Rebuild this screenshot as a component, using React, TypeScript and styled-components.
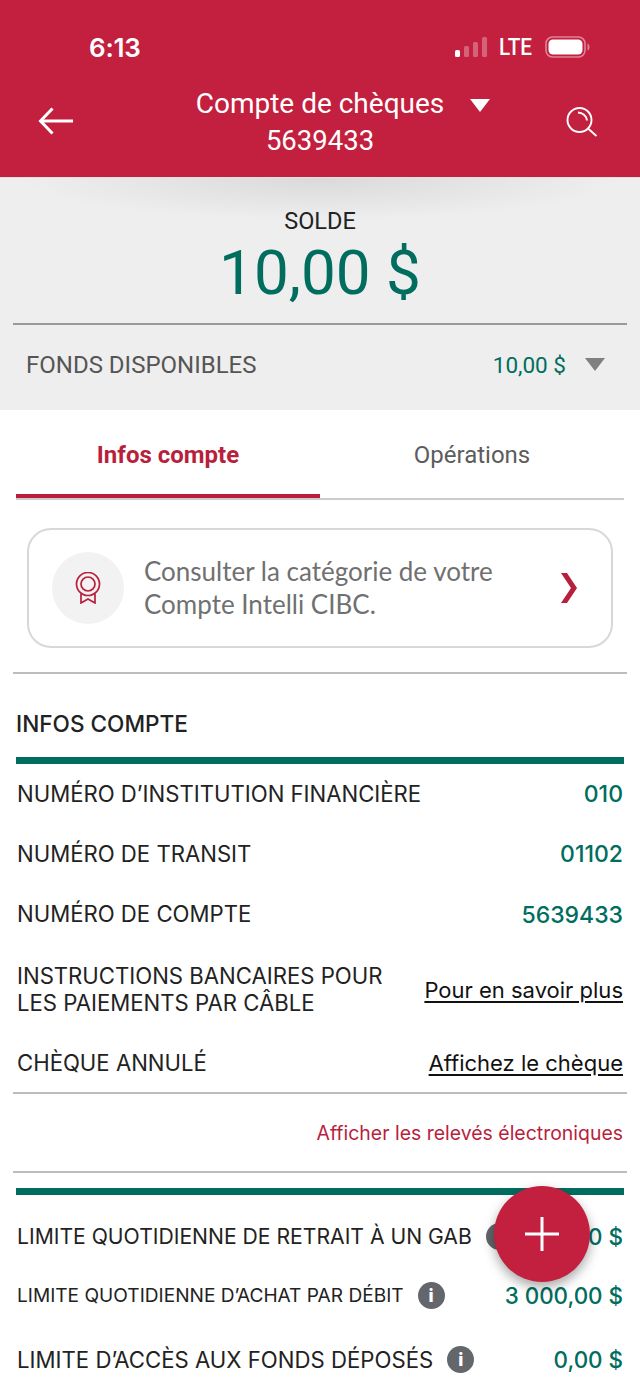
import * as React from 'react';
import styled, { createGlobalStyle } from 'styled-components';

const RED = '#c31f3e';
const TEAL = '#006d5f';

const GlobalStyle = createGlobalStyle`
  html, body {
    margin: 0;
    padding: 0;
    background: #ffffff;
  }
  body {
    font-family: 'Roboto', sans-serif;
  }
`;

const Page = styled.div`
  position: relative;
  width: 640px;
  height: 1387px;
  overflow: hidden;
  background: #ffffff;
`;

const Header = styled.header`
  height: 177px;
  background: ${RED};
  color: #ffffff;
  box-sizing: border-box;
  padding-top: 29px;
`;

const StatusBar = styled.div`
  display: flex;
  align-items: center;
  justify-content: space-between;
  height: 36px;
  padding: 0 50px 0 89px;
`;

const Clock = styled.span`
  font-family: 'Inter', sans-serif;
  font-size: 26px;
  font-weight: 600;
  letter-spacing: -0.2px;
`;

const StatusIcons = styled.div`
  display: flex;
  align-items: center;
  gap: 9px;
`;

const Lte = styled.span`
  width: 37px;
  margin-left: 3px;
  font-family: 'Roboto', sans-serif;
  font-size: 23px;
  font-weight: 500;
  transform: scaleX(0.9);
  transform-origin: left center;
`;

const NavBar = styled.div`
  display: grid;
  grid-template-columns: 1fr auto 1fr;
  align-items: start;
  padding: 21px 38px 0;
`;

const NavTitle = styled.div`
  display: flex;
  flex-direction: column;
  align-items: center;
`;

const TitleRow = styled.div`
  display: flex;
  align-items: center;
  gap: 26px;
  padding-left: 46px;
  font-size: 28px;
  line-height: 36px;
  height: 36px;
`;

const TitleCaret = styled.span`
  display: flex;
  margin-top: 3px;
`;

const AccountNumber = styled.div`
  font-size: 27.5px;
  line-height: 36px;
  margin-top: 1px;
`;

const BackButton = styled.div`
  margin-top: 20px;
  height: 36px;
`;

const SearchButton = styled.div`
  margin: 21px 4px 0 0;
  height: 36px;
  justify-self: end;
`;

const Balance = styled.section`
  height: 233px;
  background: radial-gradient(ellipse 300px 42px at 50% 0, rgba(0, 0, 0, 0.085), rgba(0, 0, 0, 0) 100%), #eeeeee;
  border-top: 1px solid #e2e2e2;
  box-sizing: border-box;
`;

const BalanceTop = styled.div`
  height: 147px;
  margin: 0 13px;
  padding-top: 30px;
  box-sizing: border-box;
  border-bottom: 2px solid #9a9a9a;
  display: flex;
  flex-direction: column;
  align-items: center;
`;

const BalanceLabel = styled.div`
  font-size: 23.5px;
  line-height: 26px;
  color: #222222;
`;

const BalanceValue = styled.div`
  font-size: 62px;
  font-weight: 380;
  line-height: 68px;
  color: ${TEAL};
  margin-top: 5px;
`;

const FundsRow = styled.div`
  display: flex;
  align-items: center;
  justify-content: space-between;
  height: 79px;
  padding: 0 35px 0 26px;
`;

const FundsLabel = styled.span`
  font-size: 24px;
  color: #555555;
`;

const FundsValue = styled.span`
  display: flex;
  align-items: center;
  gap: 19px;
  font-size: 22.5px;
  color: ${TEAL};
`;

const Tabs = styled.nav`
  display: flex;
  height: 90px;
  margin: 0 16px;
  box-sizing: border-box;
  border-bottom: 2px solid #cccccc;
`;

const Tab = styled.div<{ $active?: boolean }>`
  flex: 1;
  display: flex;
  align-items: center;
  justify-content: center;
  height: 88px;
  padding-top: 5px;
  padding-bottom: ${(p) => (p.$active ? 0 : 4)}px;
  box-sizing: border-box;
  font-size: 24px;
  font-weight: ${(p) => (p.$active ? 700 : 400)};
  color: ${(p) => (p.$active ? '#b81f3d' : '#5c5c5c')};
  border-bottom: ${(p) => (p.$active ? `4px solid #b81f3d` : 'none')};
`;

const Card = styled.div`
  display: flex;
  align-items: center;
  height: 120px;
  margin: 28px 27px 0;
  padding: 0 34px 0 23px;
  box-sizing: border-box;
  border: 2px solid #d8d8d8;
  border-radius: 24px;
`;

const CardBadge = styled.div`
  width: 72px;
  height: 72px;
  border-radius: 50%;
  background: #f2f2f2;
  display: flex;
  align-items: center;
  justify-content: center;
  flex-shrink: 0;
`;

const CardText = styled.div`
  flex: 1;
  margin-left: 20px;
  font-family: 'Lato', sans-serif;
  font-size: 26px;
  line-height: 33px;
  color: #707070;
`;

const Rule = styled.div<{ $top?: number }>`
  height: 2px;
  margin: ${(p) => p.$top ?? 0}px 13px 0;
  background: #bdbdbd;
`;

const SectionTitle = styled.h2`
  margin: 0;
  height: 83px;
  display: flex;
  align-items: center;
  padding: 15px 16px 0;
  box-sizing: border-box;
  font-family: 'Inter', sans-serif;
  font-size: 22.6px;
  font-weight: 500;
  color: #222222;
`;

const TealBar = styled.div<{ $top?: number }>`
  height: 7px;
  margin: ${(p) => p.$top ?? 0}px 16px 0;
  background: ${TEAL};
`;

const Rows = styled.div<{ $top?: number }>`
  display: flex;
  flex-direction: column;
  padding: ${(p) => p.$top ?? 0}px 17px 0;
`;

const Row = styled.div<{ $height: number }>`
  display: flex;
  align-items: center;
  justify-content: space-between;
  height: ${(p) => p.$height}px;
`;

const RowLabel = styled.span<{ $size?: number }>`
  display: flex;
  align-items: center;
  font-family: 'Inter', sans-serif;
  font-size: ${(p) => p.$size ?? 22.15}px;
  line-height: 27px;
  color: #222222;
`;

const RowValue = styled.span<{ $size?: number }>`
  font-family: 'Inter', sans-serif;
  font-size: ${(p) => p.$size ?? 23}px;
  font-weight: 500;
  color: ${TEAL};
`;

const RowLink = styled.a`
  font-family: 'Inter', sans-serif;
  font-size: 22px;
  color: #111111;
  text-decoration: underline;
  text-underline-offset: 3px;
`;

const StatementLink = styled.div`
  display: flex;
  align-items: center;
  justify-content: flex-end;
  height: 77px;
  padding: 0 17px;
  font-family: 'Inter', sans-serif;
  font-size: 19.45px;
  color: #b81f3d;
`;

const InfoDot = styled.span`
  display: inline-flex;
  align-items: center;
  justify-content: center;
  width: 27px;
  height: 27px;
  border-radius: 50%;
  background: #63666a;
  margin-left: 14px;
  color: #ffffff;
  font-family: 'Inter', sans-serif;
  font-size: 18px;
  font-weight: 800;
`;

const Fab = styled.div`
  position: absolute;
  left: 494px;
  top: 1186px;
  width: 96px;
  height: 96px;
  border-radius: 50%;
  background: ${RED};
  box-shadow: 0 5px 12px rgba(0, 0, 0, 0.35);
  display: flex;
  align-items: center;
  justify-content: center;
`;

const Triangle = ({ color, w, h }: { color: string; w: number; h: number }) => (
  <svg width={w} height={h} viewBox="0 0 20 13">
    <path d="M0 0h20L10 13z" fill={color} />
  </svg>
);

const SignalIcon = () => (
  <svg width="32" height="20" viewBox="0 0 32 20">
    <rect x="0" y="13" width="5" height="7" rx="1.5" fill="#fff" />
    <rect x="9" y="9" width="5" height="11" rx="1.5" fill="#fff" fillOpacity="0.3" />
    <rect x="18" y="5" width="5" height="15" rx="1.5" fill="#fff" fillOpacity="0.3" />
    <rect x="27" y="0" width="5" height="20" rx="1.5" fill="#fff" fillOpacity="0.3" />
  </svg>
);

const BatteryIcon = () => (
  <svg width="45" height="22" viewBox="0 0 45 22">
    <rect x="1" y="1" width="39" height="20" rx="6.5" fill="none" stroke="#fff" strokeOpacity="0.45" strokeWidth="1.6" />
    <rect x="3.5" y="3.5" width="34" height="15" rx="4.5" fill="#fff" />
    <path d="M42.5 7.5c1.5.5 2 2 2 3.5s-.5 3-2 3.5z" fill="#fff" fillOpacity="0.45" />
  </svg>
);

const BackArrow = () => (
  <svg width="36" height="30" viewBox="0 0 36 30" fill="none" stroke="#fff" strokeWidth="3">
    <path d="M35 15H3" />
    <path d="M14.5 2.5 2.5 15l12 12.5" />
  </svg>
);

const SearchIcon = () => (
  <svg width="32" height="30" viewBox="0 0 32 30" fill="none" stroke="#fff" strokeWidth="1.9">
    <circle cx="13.5" cy="13" r="12" />
    <path d="M22 21.5l8.5 7.5" />
    <path d="M12 5.5c4.5 0 8.5 3.5 9 8" />
  </svg>
);

const RibbonIcon = () => (
  <svg width="26" height="32" viewBox="0 0 26 32" fill="none" stroke="#b81f3d" strokeWidth="1.7">
    <circle cx="13" cy="12" r="11.5" />
    <circle cx="13" cy="12" r="7" />
    <path d="M6 21.5V31l7-4 7 4v-9.5" />
  </svg>
);

const Chevron = () => (
  <svg width="16" height="30" viewBox="0 0 16 30">
    <path d="M0 0h6L16 15 6 30H0l10-15z" fill="#b81f3d" />
  </svg>
);

const PlusIcon = () => (
  <svg width="36" height="36" viewBox="0 0 36 36" stroke="#fff" strokeWidth="3">
    <path d="M18 1v34M1 18h34" />
  </svg>
);

const App: React.FC = () => (
  <Page>
    <GlobalStyle />
    <Header>
      <StatusBar>
        <Clock>6:13</Clock>
        <StatusIcons>
          <SignalIcon />
          <Lte>LTE</Lte>
          <BatteryIcon />
        </StatusIcons>
      </StatusBar>
      <NavBar>
        <BackButton>
          <BackArrow />
        </BackButton>
        <NavTitle>
          <TitleRow>
            <span>Compte de chèques</span>
            <TitleCaret>
              <Triangle color="#fff" w={20} h={13} />
            </TitleCaret>
          </TitleRow>
          <AccountNumber>5639433</AccountNumber>
        </NavTitle>
        <SearchButton>
          <SearchIcon />
        </SearchButton>
      </NavBar>
    </Header>

    <Balance>
      <BalanceTop>
        <BalanceLabel>SOLDE</BalanceLabel>
        <BalanceValue>10,00 $</BalanceValue>
      </BalanceTop>
      <FundsRow>
        <FundsLabel>FONDS DISPONIBLES</FundsLabel>
        <FundsValue>
          10,00 $
          <Triangle color="#808080" w={20} h={13} />
        </FundsValue>
      </FundsRow>
    </Balance>

    <Tabs>
      <Tab $active>Infos compte</Tab>
      <Tab>Opérations</Tab>
    </Tabs>

    <Card>
      <CardBadge>
        <RibbonIcon />
      </CardBadge>
      <CardText>
        Consulter la catégorie de votre
        <br />
        Compte Intelli CIBC.
      </CardText>
      <Chevron />
    </Card>

    <Rule $top={24} />
    <SectionTitle>INFOS COMPTE</SectionTitle>
    <TealBar />

    <Rows>
      <Row $height={60}>
        <RowLabel>NUMÉRO D’INSTITUTION FINANCIÈRE</RowLabel>
        <RowValue>010</RowValue>
      </Row>
      <Row $height={60}>
        <RowLabel>NUMÉRO DE TRANSIT</RowLabel>
        <RowValue>01102</RowValue>
      </Row>
      <Row $height={61}>
        <RowLabel>NUMÉRO DE COMPTE</RowLabel>
        <RowValue>5639433</RowValue>
      </Row>
      <Row $height={89}>
        <RowLabel>
          INSTRUCTIONS BANCAIRES POUR
          <br />
          LES PAIEMENTS PAR CÂBLE
        </RowLabel>
        <RowLink>Pour en savoir plus</RowLink>
      </Row>
      <Row $height={58}>
        <RowLabel>CHÈQUE ANNULÉ</RowLabel>
        <RowLink>Affichez le chèque</RowLink>
      </Row>
    </Rows>

    <Rule />
    <StatementLink>Afficher les relevés électroniques</StatementLink>
    <Rule />
    <TealBar $top={15} />

    <Rows $top={11}>
      <Row $height={60}>
        <RowLabel $size={21.15}>
          LIMITE QUOTIDIENNE DE RETRAIT À UN GAB
          <InfoDot>i</InfoDot>
        </RowLabel>
        <RowValue $size={22.4}>500,00 $</RowValue>
      </Row>
      <Row $height={58}>
        <RowLabel $size={19.1}>
          LIMITE QUOTIDIENNE D’ACHAT PAR DÉBIT
          <InfoDot>i</InfoDot>
        </RowLabel>
        <RowValue $size={22.4}>3 000,00 $</RowValue>
      </Row>
      <Row $height={71}>
        <RowLabel $size={22.2}>
          LIMITE D’ACCÈS AUX FONDS DÉPOSÉS
          <InfoDot>i</InfoDot>
        </RowLabel>
        <RowValue $size={22.4}>0,00 $</RowValue>
      </Row>
    </Rows>

    <Fab>
      <PlusIcon />
    </Fab>
  </Page>
);

export default App;
